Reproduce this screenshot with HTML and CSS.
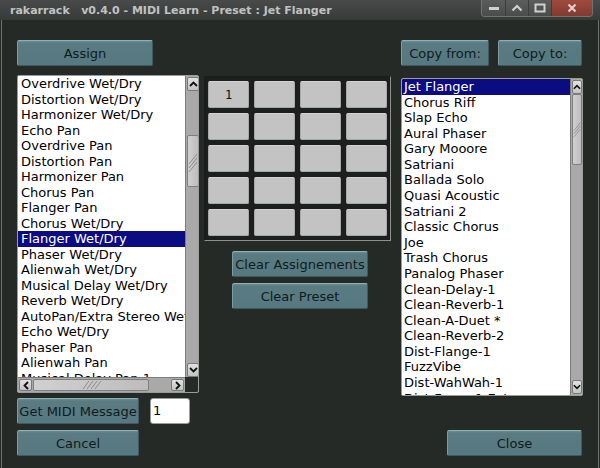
FILE: index.html
```html
<!DOCTYPE html>
<html>
<head>
<meta charset="utf-8">
<link rel="stylesheet" href="styles.css">
</head>
<body>
<div class="titlebar">
  <span class="title">rakarrack &nbsp; v0.4.0 - MIDI Learn - Preset : Jet Flanger</span>
  <div class="wbtns">
    <div class="wb wb-min"><svg width="12" height="6" viewBox="0 0 12 6"><rect x="1" y="2" width="10" height="3" fill="#d0d0d0"/></svg></div>
    <div class="wb wb-up"><svg width="12" height="8" viewBox="0 0 12 8"><path d="M1.5 6.5 L6 2 L10.5 6.5" stroke="#d0d0d0" stroke-width="2.2" fill="none"/></svg></div>
    <div class="wb wb-max"><svg width="12" height="10" viewBox="0 0 12 10"><rect x="1.5" y="1.5" width="9" height="7" stroke="#d0d0d0" stroke-width="2" fill="none"/></svg></div>
    <div class="wb wb-close"><svg width="10" height="10" viewBox="0 0 10 10"><path d="M1.5 1.5 L8.5 8.5 M8.5 1.5 L1.5 8.5" stroke="#e0d0cc" stroke-width="2.2"/></svg></div>
  </div>
</div>
<div class="window">
  <div class="row-top">
    <button class="btn btn-assign">Assign</button>
    <div class="spacer"></div>
    <button class="btn btn-from">Copy from:</button>
    <button class="btn btn-to">Copy to:</button>
  </div>
  <div class="row-main">
    <div class="list list-left">
      <div class="list-items">
        <div class="item">Overdrive Wet/Dry</div>
        <div class="item">Distortion Wet/Dry</div>
        <div class="item">Harmonizer Wet/Dry</div>
        <div class="item">Echo Pan</div>
        <div class="item">Overdrive Pan</div>
        <div class="item">Distortion Pan</div>
        <div class="item">Harmonizer Pan</div>
        <div class="item">Chorus Pan</div>
        <div class="item">Flanger Pan</div>
        <div class="item">Chorus Wet/Dry</div>
        <div class="item sel">Flanger Wet/Dry</div>
        <div class="item">Phaser Wet/Dry</div>
        <div class="item">Alienwah Wet/Dry</div>
        <div class="item">Musical Delay Wet/Dry</div>
        <div class="item">Reverb Wet/Dry</div>
        <div class="item">AutoPan/Extra Stereo Wet/Dry</div>
        <div class="item">Echo Wet/Dry</div>
        <div class="item">Phaser Pan</div>
        <div class="item">Alienwah Pan</div>
        <div class="item">Musical Delay Pan 1</div>
      </div>
      <div class="vscroll">
        <div class="sbtn"><svg width="9" height="6" viewBox="0 0 9 6"><path d="M1 5 L4.5 1.5 L8 5" stroke="#111" stroke-width="1.8" fill="none"/></svg></div>
        <div class="trough">
          <div class="gap-a"></div>
          <div class="thumb vthumb"><svg width="10" height="22" viewBox="0 0 10 22"><path d="M1 14 L9 4 M1 18 L9 8 M1 22 L9 12" stroke="#8a8a8a" stroke-width="1"/></svg></div>
          <div class="gap-b"></div>
        </div>
        <div class="sbtn"><svg width="9" height="6" viewBox="0 0 9 6"><path d="M1 1 L4.5 4.5 L8 1" stroke="#111" stroke-width="1.8" fill="none"/></svg></div>
      </div>
      <div class="hscroll">
        <div class="sbtn hbtn"><svg width="6" height="9" viewBox="0 0 6 9"><path d="M5 1 L1.5 4.5 L5 8" stroke="#111" stroke-width="1.8" fill="none"/></svg></div>
        <div class="thumb hthumb"><svg width="24" height="10" viewBox="0 0 24 10"><path d="M4 9 L10 1 M8 9 L14 1 M12 9 L18 1 M16 9 L22 1" stroke="#8a8a8a" stroke-width="1"/></svg></div>
        <div class="htrough"></div>
        <div class="sbtn hbtn"><svg width="6" height="9" viewBox="0 0 6 9"><path d="M1 1 L4.5 4.5 L1 8" stroke="#111" stroke-width="1.8" fill="none"/></svg></div>
      </div>
      <div class="corner"></div>
    </div>

    <div class="middle">
      <div class="pad-panel">
        <div class="cell">1</div><div class="cell"></div><div class="cell"></div><div class="cell"></div>
        <div class="cell"></div><div class="cell"></div><div class="cell"></div><div class="cell"></div>
        <div class="cell"></div><div class="cell"></div><div class="cell"></div><div class="cell"></div>
        <div class="cell"></div><div class="cell"></div><div class="cell"></div><div class="cell"></div>
        <div class="cell"></div><div class="cell"></div><div class="cell"></div><div class="cell"></div>
      </div>
      <button class="btn btn-clear">Clear Assignements</button>
      <button class="btn btn-clear btn-clear2">Clear Preset</button>
    </div>

    <div class="list list-right">
      <div class="list-items">
        <div class="item sel">Jet Flanger</div>
        <div class="item">Chorus Riff</div>
        <div class="item">Slap Echo</div>
        <div class="item">Aural Phaser</div>
        <div class="item">Gary Mooore</div>
        <div class="item">Satriani</div>
        <div class="item">Ballada Solo</div>
        <div class="item">Quasi Acoustic</div>
        <div class="item">Satriani 2</div>
        <div class="item">Classic Chorus</div>
        <div class="item">Joe</div>
        <div class="item">Trash Chorus</div>
        <div class="item">Panalog Phaser</div>
        <div class="item">Clean-Delay-1</div>
        <div class="item">Clean-Reverb-1</div>
        <div class="item">Clean-A-Duet *</div>
        <div class="item">Clean-Reverb-2</div>
        <div class="item">Dist-Flange-1</div>
        <div class="item">FuzzVibe</div>
        <div class="item">Dist-WahWah-1</div>
        <div class="item">Dist-Fuzzy-1 Extra</div>
      </div>
      <div class="vscroll">
        <div class="sbtn"><svg width="9" height="6" viewBox="0 0 9 6"><path d="M1 5 L4.5 1.5 L8 5" stroke="#111" stroke-width="1.8" fill="none"/></svg></div>
        <div class="trough">
          <div class="thumb rthumb"><svg width="10" height="30" viewBox="0 0 10 30"><path d="M1 16 L9 6 M1 20 L9 10 M1 24 L9 14" stroke="#8a8a8a" stroke-width="1"/></svg></div>
          <div class="gap-b"></div>
        </div>
        <div class="sbtn"><svg width="9" height="6" viewBox="0 0 9 6"><path d="M1 1 L4.5 4.5 L8 1" stroke="#111" stroke-width="1.8" fill="none"/></svg></div>
      </div>
    </div>
  </div>

  <div class="row-midi">
    <button class="btn btn-small">Get MIDI Message</button>
    <div class="num">1</div>
  </div>
  <div class="row-bottom">
    <button class="btn btn-small">Cancel</button>
    <div class="spacer"></div>
    <button class="btn btn-close">Close</button>
  </div>
</div>
</body>
</html>
```

FILE: styles.css
```css
html, body {
  margin: 0;
  padding: 0;
  width: 600px;
  height: 468px;
  overflow: hidden;
  background: #262a27;
  font-family: "DejaVu Sans", sans-serif;
}

.titlebar {
  height: 20px;
  background: linear-gradient(#484b4a, #373a39);
  display: flex;
  align-items: center;
  position: relative;
}
.title {
  margin-left: 10px;
  font-family: "DejaVu Sans", sans-serif;
  font-weight: bold;
  font-size: 11px;
  color: #c0c2c1;
}
.wbtns {
  position: absolute;
  right: 7px;
  top: 0;
  height: 16px;
  display: flex;
  border: 1px solid #707372;
  border-top: none;
  border-radius: 0 0 4px 4px;
  overflow: hidden;
}
.wb {
  display: flex;
  align-items: center;
  justify-content: center;
  height: 16px;
  background: linear-gradient(#5a5d5c, #494c4b);
  border-right: 1px solid #3a3d3c;
}
.wb-min { width: 23px; }
.wb-up { width: 22px; }
.wb-max { width: 22px; }
.wb-close { width: 40px; background: linear-gradient(#9e4a3e, #843a30); border-right: none; }

.window {
  height: 446px;
  border: 1px solid #6d706f;
  border-top: none;
  border-radius: 0 0 4px 4px;
  margin: 0 1px;
  padding: 20px 15px 0 15px;
  background: #262a27;
}

.btn {
  font-family: "DejaVu Sans", sans-serif;
  font-size: 13px;
  color: #0f1a1d;
  background: linear-gradient(#6a8c93 0, #5a7b82 2px, #567880 100%);
  border: 1px solid #3f5a60;
  border-top-color: #8fb0b6;
  border-left-color: #7c9ca2;
  border-radius: 2px;
  height: 26px;
  padding: 0;
  box-sizing: border-box;
  cursor: default;
}

.row-top {
  display: flex;
  height: 26px;
}
.spacer { flex: 1; }
.btn-assign { width: 136px; }
.btn-from { width: 88px; margin-right: 9px; }
.btn-to { width: 84px; margin-right: 1px; }

.row-main {
  display: flex;
  align-items: flex-start;
  height: 323px;
  margin-top: 9px;
}

.list {
  width: 183px;
  height: 318px;
  box-sizing: border-box;
  border: 1px solid #9a9c9b;
  border-radius: 2px;
  background: #fff;
  display: grid;
  overflow: hidden;
}
.list-left {
  grid-template-columns: 167px 15px;
  grid-template-rows: 301px 15px;
}
.list-right {
  margin-left: 10px;
  margin-top: 3px;
  grid-template-columns: 168px 13px;
  grid-template-rows: 316px;
}
.list-items {
  overflow: hidden;
  background: #fff;
}
.item {
  height: 15.5px;
  line-height: 15.5px;
  font-size: 13px;
  color: #000;
  padding-left: 3px;
  white-space: nowrap;
}
.list-right .item { height: 15.58px; line-height: 15.58px; padding-left: 2px; }
.item.sel {
  background: #0b0b82;
  color: #fff;
}

.vscroll {
  display: flex;
  flex-direction: column;
  background: #a9a9a9;
  border-left: 1px solid #7d7d7d;
  padding: 1px 0;
}
.list-left .vscroll { padding-bottom: 0; }
.sbtn {
  height: 12px;
  margin: 0 1px;
  background: linear-gradient(#e2e2e2, #c4c4c4);
  border: 1px solid #7a7a7a;
  border-radius: 2px;
  display: flex;
  align-items: center;
  justify-content: center;
}
.trough {
  flex: 1;
  display: flex;
  flex-direction: column;
}
.gap-a { height: 44px; }
.gap-b { flex: 1; }
.thumb {
  background: linear-gradient(90deg, #d0d0d0, #bdbdbd);
  border: 1px solid #7e7e7e;
  border-radius: 2px;
  margin: 0 1px;
  display: flex;
  align-items: center;
  justify-content: center;
}
.vthumb { height: 50px; }
.rthumb { height: 69px; }

.hscroll {
  display: flex;
  background: #a9a9a9;
  border-top: 1px solid #7d7d7d;
  padding: 1px 1px;
}
.hbtn {
  height: auto;
  width: 11px;
  margin: 0;
}
.hthumb {
  width: 114px;
  margin: 0 0 0 1px;
}
.htrough { flex: 1; }
.corner { background: #262a27; }

.middle {
  margin-left: 5px;
  margin-top: 1px;
  width: 187px;
  display: flex;
  flex-direction: column;
}
.pad-panel {
  height: 165px;
  box-sizing: border-box;
  background: #1c1f1d;
  border: 1px solid #1a1c1b;
  border-right-color: #8e908f;
  border-bottom-color: #8e908f;
  padding: 4px 3px 4px 3px;
  display: grid;
  grid-template-columns: repeat(4, 41px);
  grid-template-rows: repeat(5, 27px);
  column-gap: 5px;
  row-gap: 5px;
}
.cell {
  background: #c3c3c3;
  border: 1px solid #a8a8a8;
  border-top-color: #d2d2d2;
  border-radius: 2px;
  font-family: "DejaVu Sans Mono", monospace;
  font-size: 12px;
  color: #111;
  display: flex;
  align-items: center;
  justify-content: center;
}
.btn-clear {
  width: 136px;
  margin-left: 28px;
  margin-top: 10px;
}
.btn-clear2 { margin-top: 6px; }

.row-midi {
  display: flex;
  align-items: center;
  height: 26px;
}
.btn-small { width: 122px; }
.num {
  margin-left: 11px;
  width: 40px;
  height: 26px;
  box-sizing: border-box;
  background: #fff;
  border: 1px solid #9a9c9b;
  border-radius: 3px;
  font-size: 13px;
  line-height: 24px;
  padding-left: 2px;
  color: #000;
}
.row-bottom {
  display: flex;
  height: 26px;
  margin-top: 6px;
}
.btn-close { width: 135px; margin-right: 1px; }
```
